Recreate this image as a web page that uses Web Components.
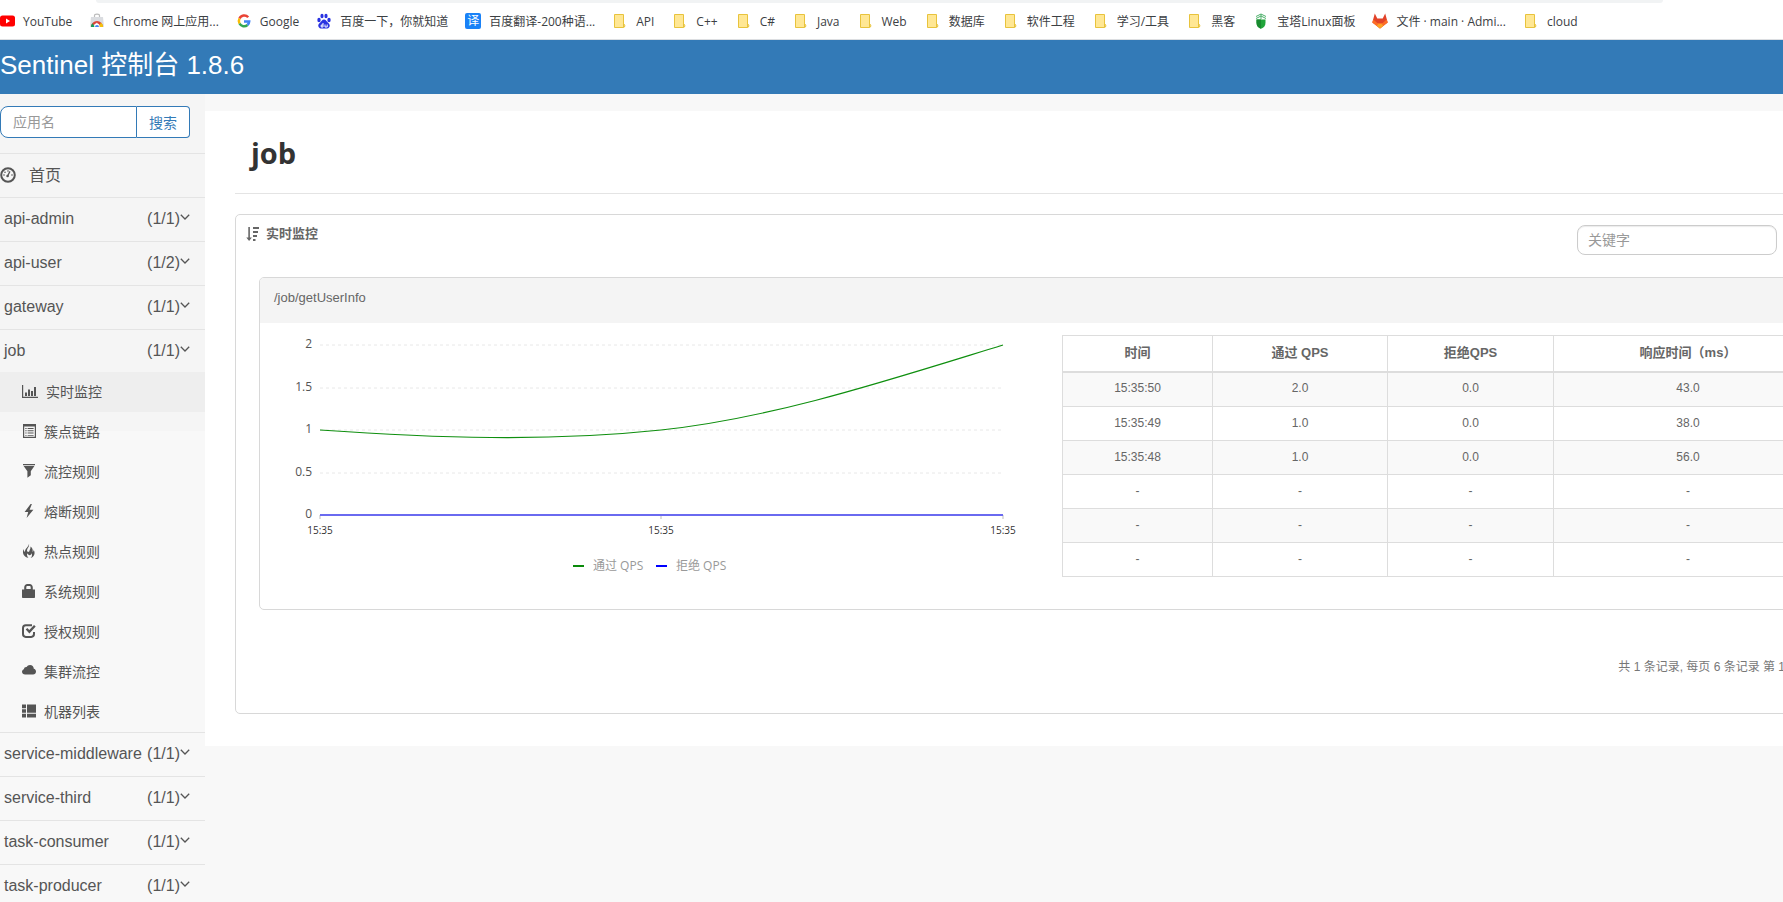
<!DOCTYPE html>
<html lang="zh-CN">
<head>
<meta charset="utf-8">
<title>Sentinel 控制台</title>
<style>
  html, body { margin: 0; height: 100%; }
  body {
    background: #f8f8f8;
    color: #555;
    font-family: "Liberation Sans", "Noto Sans CJK SC", sans-serif;
    font-size: 14px;
    overflow: hidden;
  }
</style>
</head>
<body>
<sentinel-app></sentinel-app>

<script>
const ICONS = {
  dashboard: '<circle cx="8" cy="8" r="6.8" fill="none" stroke="currentColor" stroke-width="2"/><path d="M7.2 9.6 10 4.4" stroke="currentColor" stroke-width="1.2"/><circle cx="7.6" cy="9" r="1.3"/><circle cx="4" cy="8" r=".8"/><circle cx="5" cy="5.2" r=".8"/><circle cx="8" cy="4" r=".8"/><circle cx="12" cy="8" r=".8"/>',
  chart: '<path d="M0 1h1.2v11.8H16V14H0zM3 8.5h2V12H3zM6 5.5h2V12H6zM9 7h2v5H9zM12 3h2v9h-2z"/>',
  list: '<path fill-rule="evenodd" d="M1 0h13v14H1zM2.2 2.6v10.2h10.6V2.6zM3.3 4h1.3v1H3.3zM5.6 4h6v1h-6zM3.3 6.3h1.3v1H3.3zM5.6 6.3h6v1h-6zM3.3 8.6h1.3v1H3.3zM5.6 8.6h6v1h-6zM3.3 10.9h1.3v.9H3.3zM5.6 10.9h6v.9h-6z"/>',
  filter: '<path d="M1 0h12v1.3H1zM1.6 2h10.8L8.8 7.2v4L5.4 13.800V7.200z"/>',
  flash: '<path d="M8.600 0 2.600 8h3.600L4.600 14 11.400 5.800H7.600L9.900 0z"/>',
  fire: '<path d="M6.900 0C7.900 2.600 5 4.300 5 6.600c0 1.700 2.300 1.700 2.500.2.200-1.400 1.300-2.300.9-4.200 2 1.300 2.700 3 2.100 5.200.9.100 1.300-.9 1-2.300 2.200 3.400 1 7.300-3 8.400 1.700-1.500 1.800-3 .9-4.700-.2 1.200-.8 1.900-1.800 2-.8-.3-1.900-.9-2.300-2-.5 1.700-.3 3.300 1.100 4.700C2.100 13.200-.4 9.200 1.700 5c.1 1.500.5 2.500 1.300 3C2.600 4.600 6.800 3.100 6.900 0z"/>',
  lock: '<path fill-rule="evenodd" d="M0 5.600h2.200V3.400C2.200 1.300 3.700 0 5.300 0h2.400c1.700 0 3.100 1.300 3.100 3.400v2.200H13v7.600c0 .5-.3.8-.8.8H.8c-.5 0-.8-.3-.8-.8zM4.300 5h4.400V3.400C8.700 2.500 8.200 2 7.500 2h-2c-.7 0-1.200.5-1.200 1.400z"/>',
  check: '<path d="M10 1.300H3.800C2 1.300 1 2.300 1 4.100v6c0 1.800 1 2.800 2.800 2.800h5.400c1.800 0 2.800-1 2.800-2.800V8" fill="none" stroke="currentColor" stroke-width="2"/><path d="m3.700 5.600 1.600-1.500 2 2L12 .9l1.700 1.500L7.400 9.500z"/>',
  cloud: '<path d="M3.200 10.600C1.300 10.600 0 9.400 0 7.800 0 6.500.8 5.500 2 5.200 2 3.600 3.400 2.700 4.600 3 5.300 1.700 6.500 1 8 1c2.200 0 3.700 1.600 3.800 3.700 1.300.2 2.200 1.400 2.200 2.900 0 1.700-1.300 3-3 3z"/>',
  servers: '<path d="M0 .5h4v3.800H0zM5 .5h9v8.200H5zM0 5.200h4v3.600H0zM0 9.700h4v3.800H0zM5 9.700h9v3.800H5z"/>',
  sort: '<path d="M2.300 0h1.600v10.500h2L3.100 14 .3 10.500h2zM7 0h6v2H7zM7 4h5v2H7zM7 8h4v2H7zM7 12h2.500v2H7z"/>',
  chevron: '<path d="m.8 .8 4.200 4.200L9.200.8" fill="none" stroke="currentColor" stroke-width="1.300"/>',
  youtube: '<rect x="1" y="2.500" width="15" height="11" rx="2.500" fill="#f00"/><path d="m7 5.500 4 2.500-4 2.500z" fill="#fff"/>',
  store: '<path d="M5.500 4V2.600C5.500.6 10.500.6 10.500 2.600V4" fill="none" stroke="#bbb" stroke-width="1.200"/><path d="M2 4h12l1 10H1z" fill="#dadce0"/><path d="M2 14a6 6 0 0 1 12 0h-3.500L8 9.500z" fill="#db4437"/><path d="M2 14a6 6 0 0 1 1.300-3.800L6 14z" fill="#0f9d58"/><path d="M9.500 14 12 9.500a6 6 0 0 1 2 4.500z" fill="#f4c20d"/><circle cx="8" cy="13" r="2.600" fill="#fff"/><path d="M6 14a2 2 0 1 1 4 0z" fill="#4285f4"/>',
  google: '<g fill="none" stroke-width="2.500"><path d="M12.200 4.200A5.200 5.200 0 0 0 3.500 5.500" stroke="#ea4335"/><path d="M3.500 5.500a5.200 5.200 0 0 0 0 5" stroke="#fbbc05"/><path d="M3.500 10.500a5.200 5.200 0 0 0 8 1.500" stroke="#34a853"/><path d="M11.500 12a5.200 5.200 0 0 0 1.700-3.600H8" stroke="#4285f4"/></g>',
  baidu: '<g fill="#2932e1"><ellipse cx="3" cy="7" rx="1.700" ry="2.200"/><ellipse cx="6" cy="3" rx="1.600" ry="2.300"/><ellipse cx="10" cy="3" rx="1.600" ry="2.300"/><ellipse cx="13" cy="7" rx="1.700" ry="2.200"/><path d="M8 6.500c1.800 0 2.500 1.800 3.800 3 1.600 1.300 2.400 2.500 1.700 4.300-.8 1.900-3 1.900-5.500 1.600-2.500.3-4.700.3-5.500-1.600-.7-1.800.1-3 1.700-4.300C5.500 8.300 6.200 6.500 8 6.500z"/></g><path d="M7 10v4H5.200v-2H7M9 11.500V14h2.200v-2.500" fill="none" stroke="#fff"/>',
  folder: '<path d="M2.500 1.500h9v9.500c1.800 0 1.800 3.500 0 3.500h-9z" fill="#ffe794" stroke="#e8c33c"/><path d="M11.500 14.500v-3.500" fill="none" stroke="#e8c33c"/>',
  pagoda: '<g fill="none" stroke="#4caf6a"><path d="M3 3.500 8 1l5 2.500M3 5.500 8 3l5 2.500M8 1v5"/></g><path d="M3.500 6.500h9v3c0 3.500-1.500 5-4.500 6.200-3-1.200-4.500-2.700-4.500-6.200z" fill="#20a53a"/><path d="M8 6.500v9.200c-3-1.200-4.500-2.700-4.500-6.200v-3z" fill="#188a2f"/>',
  gitlab: '<path d="M8 15.500.3 9.500 2.800.5l2.500 5h5.400l2.500-5 2.500 9z" fill="#e24329"/><path d="m.3 9.500 1-3 4 3.500h5.400l4-3.500 1 3L8 15.500z" fill="#fc6d26"/><path d="m4.500 12.800 2-1.800h3l2 1.800L8 15.500z" fill="#fca326"/>'
};

class SentinelElement extends HTMLElement {
  constructor() {
    super();
    this.attachShadow({ mode: 'open' });
  }
  connectedCallback() {
    this.shadowRoot.innerHTML = this.template();
  }
}

/* <ui-icon name size w h>: one glyph from the icon map */
customElements.define('ui-icon', class extends SentinelElement {
  template() {
    const w = this.getAttribute('w') || 14;
    const h = this.getAttribute('h') || w;
    return `<style>
      :host { display: inline-flex; flex: none; }
      svg { display: block; fill: currentColor; }
    </style>
    <svg width="${w}" height="${h}" viewBox="0 0 ${w} ${h}" aria-hidden="true">${ICONS[this.getAttribute('name')]}</svg>`;
  }
});

customElements.define('bookmark-link', class extends SentinelElement {
  template() {
    const icon = this.getAttribute('icon') || 'folder';
    const mark = icon === 'translate'
      ? '<span class="badge">译</span>'
      : `<ui-icon name="${icon}" w="16"></ui-icon>`;
    return `<style>
      :host { display: block; flex: none; }
      :host(:not([icon])) { padding-right: 1px; }
      a { display: flex; align-items: center; gap: 8px; color: #3c4043; text-decoration: none; white-space: nowrap; line-height: 20px; }
      .text { padding-top: 2px; }
      .badge { width: 16px; height: 16px; border-radius: 2px; background: #1a82f7; color: #fff; font-size: 12px; line-height: 16px; text-align: center; }
    </style>
    <a href="#">${mark}<span class="text"><slot></slot></span></a>`;
  }
});

customElements.define('bookmark-bar', class extends SentinelElement {
  template() {
    return `<style>
      :host { display: block; background: #fff; border-bottom: 1px solid #dcdee1; font: 12px "Open Sans", "Noto Sans CJK SC", sans-serif; overflow: hidden; }
      .omnibox { height: 3px; margin: 0 120px 0 96px; background: #f1f3f4; border-radius: 0 0 8px 8px; }
      nav { display: flex; align-items: center; gap: 17px; height: 36px; margin-left: -1px; }
    </style>
    <div class="omnibox"></div>
    <nav aria-label="书签"><slot></slot></nav>`;
  }
});

customElements.define('app-header', class extends SentinelElement {
  template() {
    return `<style>
      :host { display: block; background: #337ab7; color: #fff; }
      a { display: block; height: 54px; line-height: 50px; font-size: 26px; color: inherit; text-decoration: none; }
    </style>
    <a href="#"><slot></slot></a>`;
  }
});

customElements.define('app-search', class extends SentinelElement {
  template() {
    return `<style>
      :host { display: block; padding: 12px 15px 15px 0; }
      form { display: flex; height: 32px; }
      input, button { box-sizing: border-box; margin: 0; border: 1px solid #337ab7; background: #fff; font: inherit; outline: 0; }
      input { flex: 1; min-width: 0; padding: 0 12px; border-radius: 8px 0 0 8px; color: #555; }
      input::placeholder { color: #999; }
      button { width: 53px; padding: 0; border-left: 0; border-radius: 0 4px 4px 0; color: #337ab7; }
    </style>
    <form onsubmit="return false">
      <input type="text" placeholder="应用名" aria-label="应用名">
      <button type="button">搜索</button>
    </form>`;
  }
});

/* One application row; its rule pages go into the slot */
customElements.define('nav-app', class extends SentinelElement {
  template() {
    const count = this.getAttribute('count');
    const head = count
      ? `<span class="name">${this.getAttribute('name')}</span><span class="count">(${count})</span><ui-icon name="chevron" w="10" h="6"></ui-icon>`
      : `<ui-icon name="dashboard" w="16"></ui-icon><span class="home">${this.getAttribute('name')}</span>`;
    return `<style>
      :host { display: block; border-top: 1px solid #e4e4e4; }
      a { box-sizing: border-box; display: flex; align-items: center; height: 43px; padding: 0 15px 2px ${count ? 4 : 0}px; font-size: 16px; color: #555; text-decoration: none; white-space: nowrap; }
      .name { flex: 1; }
      .home { padding: 0 0 2px 13px; }
      a ui-icon[name=chevron] { padding-bottom: 3px; }
      .pages { display: block; margin-top: -1px; }
    </style>
    <a href="#">${head}</a>${this.children.length ? '<div class="pages"><slot></slot></div>' : ''}`;
  }
});

customElements.define('nav-page', class extends SentinelElement {
  template() {
    const wide = this.getAttribute('icon') === 'chart';
    return `<style>
      :host { display: block; }
      :host([active]) { background: #eee; }
      a { box-sizing: border-box; display: flex; align-items: center; gap: 8px; height: 40px; padding: 0 0 2px 22px; color: #555; text-decoration: none; }
    </style>
    <a href="#"><ui-icon name="${this.getAttribute('icon')}" w="${wide ? 16 : 14}" h="14"></ui-icon><span><slot></slot></span></a>`;
  }
});

customElements.define('side-nav', class extends SentinelElement {
  template() {
    return `<style>
      :host { display: block; background: linear-gradient(#f5f5f5 337px, #f8f8f8 337px); }
    </style>
    <app-search></app-search>
    <nav>
      <nav-app name="首页"></nav-app>
      <nav-app name="api-admin" count="1/1"></nav-app>
      <nav-app name="api-user" count="1/2"></nav-app>
      <nav-app name="gateway" count="1/1"></nav-app>
      <nav-app name="job" count="1/1">
        <nav-page icon="chart" active>实时监控</nav-page>
        <nav-page icon="list">簇点链路</nav-page>
        <nav-page icon="filter">流控规则</nav-page>
        <nav-page icon="flash">熔断规则</nav-page>
        <nav-page icon="fire">热点规则</nav-page>
        <nav-page icon="lock">系统规则</nav-page>
        <nav-page icon="check">授权规则</nav-page>
        <nav-page icon="cloud">集群流控</nav-page>
        <nav-page icon="servers">机器列表</nav-page>
      </nav-app>
      <nav-app name="service-middleware" count="1/1"></nav-app>
      <nav-app name="service-third" count="1/1"></nav-app>
      <nav-app name="task-consumer" count="1/1"></nav-app>
      <nav-app name="task-producer" count="1/1"></nav-app>
    </nav>`;
  }
});

customElements.define('qps-chart', class extends SentinelElement {
  template() {
    const left = 60, right = 743, base = 192, step = 85;
    const rows = [[0, '0'], [0.5, '0.5'], [1, '1'], [1.5, '1.5'], [2, '2']].map(([v, label]) => {
      const y = Math.round(base - v * step);
      const line = v ? `<path d="M${left} ${y}H${right}" stroke="#e8e8e8" stroke-dasharray="3 3"/>` : '';
      return `${line}<text class="y" x="52" y="${y + 3}">${label}</text>`;
    }).join('');
    const ticks = [60, 401, 743].map(x =>
      `<path d="M${x} 192v4" stroke="#bbb"/><text class="x" x="${x}" y="211">15:35</text>`).join('');
    return `<style>
      :host { display: block; }
      svg { display: block; width: 100%; height: auto; fill: none; font: 12px "Open Sans", "Noto Sans CJK SC", sans-serif; }
      text { fill: #545454; }
      .y { text-anchor: end; }
      .x { text-anchor: middle; font-size: 10px; fill: #333; }
      .key { fill: #999; }
    </style>
    <svg viewBox="0 0 802 270" role="img" aria-label="QPS">
      ${rows}${ticks}
      <path d="M60 107C174 115 288 119 401 107S629 57 743 22" stroke="#0f8f0f" stroke-width="1.200"/>
      <path d="M60 192H743" stroke="#6a6af0" stroke-width="2"/>
      <path d="M313 243h11" stroke="#0a8a0a" stroke-width="2"/><text class="key" x="333" y="247">通过 QPS</text>
      <path d="M396 243h11" stroke="#00f" stroke-width="2"/><text class="key" x="416" y="247">拒绝 QPS</text>
    </svg>`;
  }
});

customElements.define('metric-table', class extends SentinelElement {
  template() {
    const rows = [
      ['15:35:50', '2.0', '0.0', '43.0'],
      ['15:35:49', '1.0', '0.0', '38.0'],
      ['15:35:48', '1.0', '0.0', '56.0'],
      ['-', '-', '-', '-'], ['-', '-', '-', '-'], ['-', '-', '-', '-']
    ];
    return `<style>
      :host { display: block; }
      table { width: 100%; border-collapse: collapse; table-layout: fixed; font-size: 12px; color: #666; }
      th, td { box-sizing: border-box; height: 34px; padding: 0 0 2px; border: 1px solid #ddd; text-align: center; }
      th { height: 36px; border-bottom-width: 2px; font-size: 13px; padding-bottom: 3px; }
      tbody tr:first-child td { height: 35px; }
      tbody tr:nth-child(odd) { background: #f9f9f9; }
      .time { width: 150px; } .pass { width: 175px; } .block { width: 166px; }
    </style>
    <table>
      <colgroup><col class="time"><col class="pass"><col class="block"><col></colgroup>
      <thead><tr><th>时间</th><th>通过 QPS</th><th>拒绝QPS</th><th>响应时间（ms）</th></tr></thead>
      <tbody>${rows.map(r => `<tr>${r.map(c => `<td>${c}</td>`).join('')}</tr>`).join('')}</tbody>
    </table>`;
  }
});

/* Panel for one resource: name in the header, chart and table in the body */
customElements.define('resource-panel', class extends SentinelElement {
  template() {
    return `<style>
      :host { display: block; border: 1px solid #d8d8d8; border-radius: 5px; overflow: hidden; }
      header { height: 45px; line-height: 40px; padding-left: 14px; background: #f4f4f4; font-size: 13px; color: #666; }
      .body { display: grid; grid-template-columns: 802fr 761fr; padding: 0 17px 16px 0; }
      metric-table { padding-top: 12px; }
    </style>
    <header>${this.getAttribute('name')}</header>
    <div class="body"><qps-chart></qps-chart><metric-table></metric-table></div>`;
  }
});

customElements.define('monitor-card', class extends SentinelElement {
  template() {
    return `<style>
      :host { display: block; border: 1px solid #d8d8d8; border-radius: 5px; }
      header { display: flex; align-items: flex-start; justify-content: space-between; padding: 10px 87px 22px 10px; }
      h2 { display: flex; align-items: center; gap: 6px; margin: 0; font-size: 13px; line-height: 18px; color: #666; }
      input { box-sizing: border-box; width: 200px; height: 30px; padding: 0 10px; border: 1px solid #ccc; border-radius: 8px; box-shadow: inset 0 1px 1px rgba(0,0,0,.08); background: #fff; font: inherit; color: #555; }
      input::placeholder { color: #999; }
      .body { padding: 0 23px; }
      footer { display: flex; justify-content: flex-end; padding: 47px 79px 36px 0; font-size: 12px; line-height: 20px; color: #777; white-space: nowrap; }
    </style>
    <header>
      <h2><ui-icon name="sort" w="14"></ui-icon>实时监控</h2>
      <input type="text" placeholder="关键字" aria-label="关键字">
    </header>
    <div class="body"><slot></slot></div>
    <footer>共 1 条记录, 每页 6 条记录 第 1</footer>`;
  }
});

customElements.define('sentinel-app', class extends SentinelElement {
  template() {
    return `<style>
      :host { display: block; }
      .layout { display: grid; grid-template-columns: 205px minmax(0, 1fr); align-items: start; }
      main { margin-top: 17px; padding: 0 0 32px 30px; background: #fff; overflow: hidden; }
      .content { width: calc(100% + 82px); }
      h1 { margin: 0 0 20px; padding: 0 16px; height: 82px; border-bottom: 1px solid #e4e4e4; font: bold 29px/84px "Open Sans", "Noto Sans CJK SC", sans-serif; color: #333; }
    </style>
    <bookmark-bar>
      <bookmark-link icon="youtube">YouTube</bookmark-link>
      <bookmark-link icon="store">Chrome 网上应用...</bookmark-link>
      <bookmark-link icon="google">Google</bookmark-link>
      <bookmark-link icon="baidu">百度一下，你就知道</bookmark-link>
      <bookmark-link icon="translate">百度翻译-200种语...</bookmark-link>
      <bookmark-link>API</bookmark-link>
      <bookmark-link>C++</bookmark-link>
      <bookmark-link>C#</bookmark-link>
      <bookmark-link>Java</bookmark-link>
      <bookmark-link>Web</bookmark-link>
      <bookmark-link>数据库</bookmark-link>
      <bookmark-link>软件工程</bookmark-link>
      <bookmark-link>学习/工具</bookmark-link>
      <bookmark-link>黑客</bookmark-link>
      <bookmark-link icon="pagoda">宝塔Linux面板</bookmark-link>
      <bookmark-link icon="gitlab">文件 · main · Admi...</bookmark-link>
      <bookmark-link>cloud</bookmark-link>
    </bookmark-bar>
    <app-header>Sentinel 控制台 1.8.6</app-header>
    <div class="layout">
      <side-nav></side-nav>
      <main>
        <div class="content">
          <h1>job</h1>
          <monitor-card><resource-panel name="/job/getUserInfo"></resource-panel></monitor-card>
        </div>
      </main>
    </div>`;
  }
});
</script>
</body>
</html>
